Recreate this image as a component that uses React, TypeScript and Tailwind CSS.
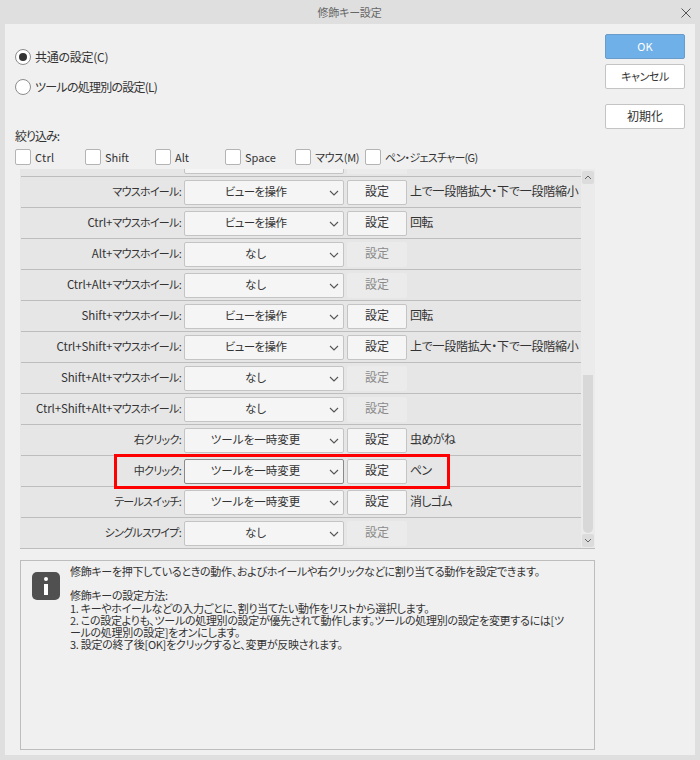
const rows = [
  { l: "マウスホイール:", v: "ビューを操作", n: "上で一段階拡大・下で一段階縮小", on: true },
  { l: "Ctrl+マウスホイール:", v: "ビューを操作", n: "回転", on: true },
  { l: "Alt+マウスホイール:", v: "なし", n: "", on: false },
  { l: "Ctrl+Alt+マウスホイール:", v: "なし", n: "", on: false },
  { l: "Shift+マウスホイール:", v: "ビューを操作", n: "回転", on: true },
  { l: "Ctrl+Shift+マウスホイール:", v: "ビューを操作", n: "上で一段階拡大・下で一段階縮小", on: true },
  { l: "Shift+Alt+マウスホイール:", v: "なし", n: "", on: false },
  { l: "Ctrl+Shift+Alt+マウスホイール:", v: "なし", n: "", on: false },
  { l: "右クリック:", v: "ツールを一時変更", n: "虫めがね", on: true },
  { l: "中クリック:", v: "ツールを一時変更", n: "ペン", on: true, hi: true },
  { l: "テールスイッチ:", v: "ツールを一時変更", n: "消しゴム", on: true },
  { l: "シングルスワイプ:", v: "なし", n: "", on: false },
];

function Chevron() {
  return (
    <svg width="10" height="6" viewBox="0 0 10 6" className="shrink-0">
      <path d="M1 1l4 4 4-4" fill="none" stroke="#555" strokeWidth="1.1" />
    </svg>
  );
}

function Select({ v, hi }: { v: string; hi?: boolean }) {
  const track = v === "ビューを操作" ? "tracking-[-0.6px]" : v === "なし" ? "tracking-[0px]" : "tracking-[0px]";
  return (
    <div className={`w-[160px] h-[25px] flex items-center bg-[#f5f5f5] border rounded-[2px] pr-[4px] ${hi ? "border-[#8a8a8a]" : "border-[#c4c4c4]"}`}>
      <span className={`flex-1 text-center pl-[1px] pr-[4px] pb-[3px] text-[11.5px] ${track}`}>{v}</span>
      <Chevron />
    </div>
  );
}

function Label({ text }: { text: string }) {
  const m = text.match(/^([A-Za-z+]*)(.*)$/);
  return (
    <>
      <span className="text-[11.5px] tracking-[-0.1px]">{m ? m[1] : ""}</span>
      <span className="text-[11px] tracking-[-0.7px]">{m ? m[2] : text}</span>
    </>
  );
}

function Row({ r }: { r: (typeof rows)[number] }) {
  const noteTrack = r.n.length > 6 ? "tracking-[-0.25px]" : "tracking-[-0.7px]";
  return (
    <div className="h-[31px] flex items-center border-b border-[#bdbdbd] pt-[1px] relative">
      <div className="w-[163px] text-right pr-[3px] whitespace-nowrap pb-[3px]">
        <Label text={r.l} />
      </div>
      <Select v={r.v} hi={r.hi} />
      <div
        className={`ml-[3px] w-[60px] h-[25px] flex items-center justify-center rounded-[2px] border pb-[3px] ${
          r.on ? "bg-[#f5f5f5] border-[#c4c4c4]" : "bg-[#ebebeb] border-[#ebebeb] text-[#8a8a8a]"
        }`}
      >
        設定
      </div>
      <div className={`ml-[3px] whitespace-nowrap pb-[3px] ${noteTrack}`}>{r.n}</div>
      {r.hi && <div className="absolute left-[93px] top-[-2px] w-[336px] h-[35px] border-[3px] border-[#ff0000] pointer-events-none" />}
    </div>
  );
}

function Check({ label, w, t = "" }: { label: string; w: string; t?: string }) {
  return (
    <div className={`flex items-center ${w}`}>
      <div className="w-[16px] h-[16px] bg-white border border-[#b4b4b4] rounded-[2px] shrink-0" />
      <span className={`ml-[4px] whitespace-nowrap text-[11px] pb-[1px] ${t}`}>{label}</span>
    </div>
  );
}

function Btn({ children, primary, className = "", t = "" }: { children: string; primary?: boolean; className?: string; t?: string }) {
  return (
    <div
      className={`w-[80px] h-[25px] flex items-center justify-center rounded-[2px] border pb-[1px] ${
        primary ? "bg-[#70b0e8] border-[#6a9ccb] text-white" : "bg-white border-[#c4c4c4]"
      } ${className} ${t}`}
    >
      {children}
    </div>
  );
}

export default function App() {
  return (
    <div className="w-[700px] h-[760px] bg-[#dfdfdf] text-[#333] text-[12px] leading-[16px] flex flex-col overflow-hidden [font-family:'Noto_Sans_CJK_JP','Noto_Sans',sans-serif] [font-feature-settings:'palt']">
      <div className="h-[24px] shrink-0 flex items-center relative">
        <div className="flex-1 text-center text-[#666] pb-[1px] text-[11px] tracking-[-0.2px] pr-[1px]">修飾キー設定</div>
        <svg width="10" height="10" viewBox="0 0 10 10" className="absolute right-[9px] top-[8px]">
          <path d="M.5.5l9 9M9.5.5l-9 9" stroke="#555" strokeWidth="1" fill="none" />
        </svg>
      </div>
      <div className="mx-[5px] h-[731px] bg-[#f0f0f0] flex">
        <div className="w-[590px] pl-[10px] shrink-0">
          <div className="flex items-center mt-[25px] h-[16px]">
            <div className="w-[16px] h-[16px] rounded-full bg-white border border-[#8c8c8c] flex items-center justify-center">
              <div className="w-[8px] h-[8px] rounded-full bg-[#333]" />
            </div>
            <span className="ml-[4px] tracking-[-0.25px] pb-[1px]">共通の設定(C)</span>
          </div>
          <div className="flex items-center mt-[14px] h-[16px]">
            <div className="w-[16px] h-[16px] rounded-full bg-white border border-[#8c8c8c]" />
            <span className="ml-[4px] tracking-[-0.75px] pb-[1px]">ツールの処理別の設定(L)</span>
          </div>
          <div className="mt-[33px] h-[16px] tracking-[-1px]">絞り込み:</div>
          <div className="flex mt-[5px] h-[16px]">
            <Check label="Ctrl" w="w-[70px]" t="tracking-[0.3px]" />
            <Check label="Shift" w="w-[70px]" />
            <Check label="Alt" w="w-[70px]" />
            <Check label="Space" w="w-[70px]" />
            <Check label="マウス(M)" w="w-[70px]" t="tracking-[-0.3px]" />
            <Check label="ペン・ジェスチャー(G)" w="w-[150px]" t="tracking-[-0.7px]" />
          </div>
          <div className="ml-[5px] mt-[4px] w-[575px] h-[380px] bg-[#e6e6e6] flex overflow-hidden border-b border-[#bdbdbd]">
            <div className="w-[561px] overflow-hidden">
              <div className="mt-[-23px] pl-[1px]">
                <div className="h-[31px] flex items-center border-b border-[#bdbdbd] pt-[1px]">
                  <div className="ml-[163px] w-[160px] h-[25px] bg-[#f5f5f5] border border-[#c4c4c4] rounded-[2px]" />
                  <div className="ml-[3px] w-[60px] h-[25px] bg-[#ebebeb]" />
                </div>
                {rows.map((r) => (
                  <Row key={r.l} r={r} />
                ))}
              </div>
            </div>
            <div className="w-[14px] flex flex-col items-center bg-[#ebebeb]">
              <div className="w-[12px] h-[13px] mt-[2px] bg-[#dcdcdc] flex items-center justify-center rounded-[2px]">
                <svg width="8" height="5" viewBox="0 0 8 5"><path d="M1 4l3-3 3 3" fill="none" stroke="#666" strokeWidth="1" /></svg>
              </div>
              <div className="flex-1" />
              <div className="w-[10px] h-[158px] bg-[#d8d8d8] rounded-b-[5px]" />
              <div className="w-[12px] h-[13px] mt-[1px] mb-[1px] bg-[#dcdcdc] flex items-center justify-center rounded-[2px]">
                <svg width="8" height="5" viewBox="0 0 8 5"><path d="M1 1l3 3 3-3" fill="none" stroke="#666" strokeWidth="1" /></svg>
              </div>
            </div>
          </div>
          <div className="ml-[5px] mt-[11px] w-[575px] h-[190px] border border-[#bdbdbd] flex">
            <div className="ml-[11px] mt-[11px] w-[28px] h-[28px] rounded-[5px] bg-[#505050] flex flex-col items-center justify-center shrink-0">
              <div className="w-[4px] h-[4px] rounded-full bg-white" />
              <div className="w-[4px] h-[11px] mt-[3px] bg-white" />
            </div>
            <div className="ml-[10px] mt-[4px] text-[11px] tracking-[-0.3px] leading-[12.2px] whitespace-pre">
              {"修飾キーを押下しているときの動作、およびホイールや右クリックなどに割り当てる動作を設定できます。\n\n修飾キーの設定方法:\n1. キーやホイールなどの入力ごとに、割り当てたい動作をリストから選択します。\n2. この設定よりも、ツールの処理別の設定が優先されて動作します。ツールの処理別の設定を変更するには[ツ\nールの処理別の設定]をオンにします。\n3. 設定の終了後[OK]をクリックすると、変更が反映されます。"}
            </div>
          </div>
        </div>
        <div className="flex flex-col pl-[10px] pt-[10px]">
          <Btn primary t="text-[11px]">OK</Btn>
          <Btn className="mt-[5px]" t="text-[11px] tracking-[-0.4px]">キャンセル</Btn>
          <Btn className="mt-[15px]">初期化</Btn>
        </div>
      </div>
    </div>
  );
}
